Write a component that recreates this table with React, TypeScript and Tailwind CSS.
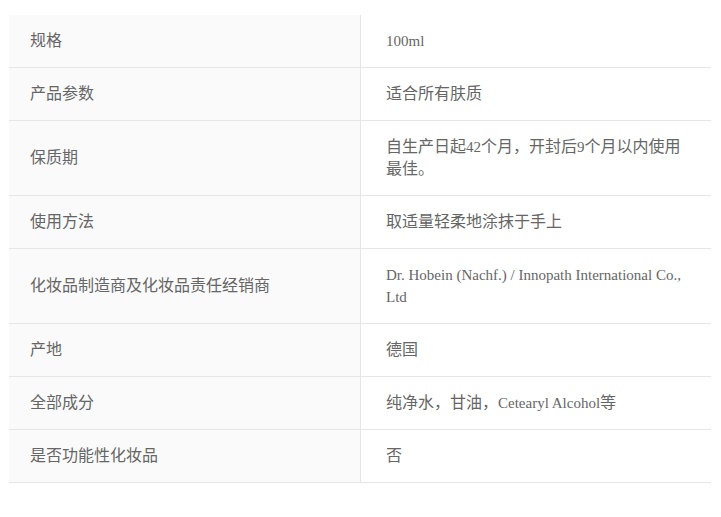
import React from "react";

type Row = { label: string; value: React.ReactNode };

const L = ({ children }: { children: React.ReactNode }) => (
  <span className="text-[15px]">{children}</span>
);

const rows: Row[] = [
  { label: "规格", value: <L>100ml</L> },
  { label: "产品参数", value: "适合所有肤质" },
  {
    label: "保质期",
    value: (
      <>
        自生产日起<L>42</L>个月，开封后<L>9</L>个月以内使用最佳。
      </>
    ),
  },
  { label: "使用方法", value: "取适量轻柔地涂抹于手上" },
  {
    label: "化妆品制造商及化妆品责任经销商",
    value: <L>Dr. Hobein (Nachf.) / Innopath International Co., Ltd</L>,
  },
  { label: "产地", value: "德国" },
  {
    label: "全部成分",
    value: (
      <>
        纯净水，甘油，<L>Cetearyl Alcohol</L>等
      </>
    ),
  },
  { label: "是否功能性化妆品", value: "否" },
];

export default function App() {
  return (
    <div
      className="min-h-[517px] w-[721px] bg-white pt-[15px] text-[16px] leading-[22px] text-[#666666]"
      style={{ fontFamily: '"Liberation Serif", "Noto Sans CJK SC", serif' }}
    >
      <div className="ml-[9px] w-[702px]">
        {rows.map((r) => (
          <div key={r.label} className="flex border-b border-[#e6e6e6]">
            <div className="flex w-[352px] shrink-0 items-center border-r border-[#e6e6e6] bg-[#fafafa] py-[15px] pl-[21px] pr-[20px]">
              {r.label}
            </div>
            <div className="flex flex-1 items-center py-[15px] pl-[25px] pr-[25px]">
              <div>{r.value}</div>
            </div>
          </div>
        ))}
      </div>
    </div>
  );
}
